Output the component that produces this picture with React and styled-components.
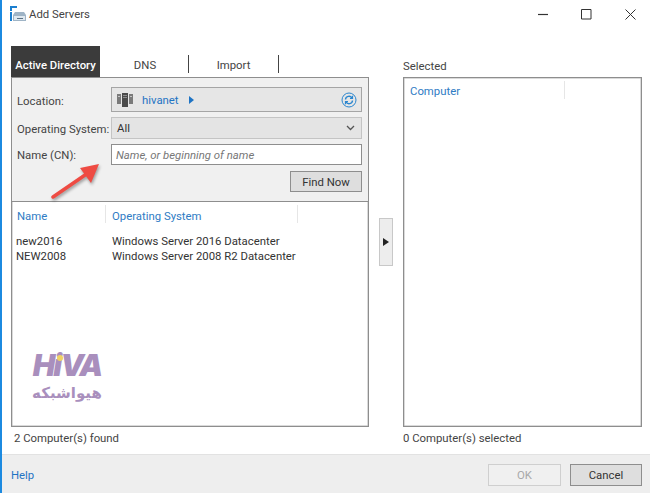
import React from "react"
import styled, { createGlobalStyle } from "styled-components"

const GlobalStyle = createGlobalStyle`
  html, body {
    margin: 0;
    padding: 0;
    background: #fff;
  }
`

const Window = styled.div`
  position: relative;
  box-sizing: border-box;
  width: 650px;
  height: 493px;
  overflow: hidden;
  display: flex;
  flex-direction: column;
  background: #fff;
  border-left: 2px solid #1c8ae0;
  color: #333;
  font-family: Roboto, "Open Sans", sans-serif;
  font-size: 11.35px;
`

const TitleBar = styled.div`
  height: 28px;
  display: flex;
  align-items: center;
  padding-left: 7px;
`

const Title = styled.span`
  margin-left: 2px;
  color: #444;
`

const WindowButtons = styled.div`
  margin-left: auto;
  display: flex;
  gap: 3.5px;
`

const WindowButton = styled.div`
  width: 40px;
  height: 28px;
  display: flex;
  align-items: center;
  justify-content: center;
`

const Body = styled.div`
  flex: 1;
  box-sizing: border-box;
  padding: 18px 0 0 9px;
  display: grid;
  grid-template-columns: 358px 34px 239px;
  grid-template-rows: 31px 350px 27px;
`

const TabBar = styled.div`
  display: flex;
  align-items: stretch;
`

const Tab = styled.div`
  width: ${p => p.$width}px;
  display: flex;
  align-items: center;
  justify-content: center;
  padding-top: 7px;
  padding-left: ${p => p.$nudge || 0}px;
  box-sizing: border-box;
  background: ${p => (p.$active ? "#3b3b3b" : "transparent")};
  color: ${p => (p.$active ? "#fff" : "#444")};
  font-weight: ${p => (p.$active ? 500 : 400)};
  white-space: nowrap;
`

const TabDivider = styled.div`
  width: 1px;
  height: 18px;
  margin-top: 9px;
  background: #444;
`

const SelectedLabel = styled.div`
  display: flex;
  align-items: flex-end;
  padding-bottom: 4px;
  color: #444;
  grid-column: 3;
`

const Panel = styled.div`
  grid-column: ${p => p.$column};
  grid-row: 2;
  display: flex;
  flex-direction: column;
  position: relative;
  border: 1px solid #8e8e8e;
  box-shadow: inset 0 0 0 0.5px #b5b5b5;
`

const SearchArea = styled.div`
  height: 124px;
  box-sizing: border-box;
  background: #f0f0f0;
  border-bottom: 1px solid #8e8e8e;
  padding: 9px 6px 0 5px;
  display: grid;
  grid-template-columns: 94px 1fr;
  grid-template-rows: 25px 22px 22px 21px;
  row-gap: 5px;
  align-items: center;
`

const FieldLabel = styled.label`
  color: #444;
  white-space: nowrap;
  margin-top: ${p => p.$shift || 0}px;
`

const LocationBox = styled.div`
  height: 100%;
  box-sizing: border-box;
  display: flex;
  align-items: center;
  padding: 0 4px 0 5px;
  background: #e6e6e6;
  border: 1px solid #a5a5a5;
  color: #1f74c4;
`

const LocationName = styled.span`
  margin-left: 9px;
`

const LocationArrow = styled.span`
  margin-left: 10px;
  width: 0;
  height: 0;
  border-left: 5px solid #1f74c4;
  border-top: 4px solid transparent;
  border-bottom: 4px solid transparent;
`

const Refresh = styled.span`
  margin-left: auto;
  display: flex;
`

const SelectBox = styled.div`
  height: 100%;
  box-sizing: border-box;
  display: flex;
  align-items: center;
  justify-content: space-between;
  padding: 0 6px 0 5px;
  background: #e4e4e4;
  border: 1px solid #c4c4c4;
  color: #333;
`

const NameInput = styled.input`
  height: 21px;
  align-self: start;
  width: 100%;
  box-sizing: border-box;
  padding: 0 4px;
  background: #fff;
  border: 1px solid #8e8e8e;
  font-family: inherit;
  font-size: 11.35px;
  outline: none;
  &::placeholder {
    color: #777;
    font-style: italic;
    opacity: 1;
  }
`

const SearchActions = styled.div`
  grid-column: 2;
  display: flex;
  justify-content: flex-end;
  height: 100%;
`

const DialogButton = styled.button`
  box-sizing: border-box;
  width: ${p => p.$width}px;
  height: ${p => p.$height}px;
  padding: 0;
  font-family: inherit;
  font-size: 11.35px;
  background: ${p => (p.$disabled ? "#f0f0f0" : "#dedede")};
  border: 1px solid ${p => (p.$disabled ? "#cfcfcf" : "#8e8e8e")};
  color: ${p => (p.$disabled ? "#a8a8a8" : "#333")};
`

const ListHead = styled.div`
  height: ${p => p.$height}px;
  display: grid;
  grid-template-columns: ${p => p.$columns};
  align-items: center;
  color: #2f7cc4;
`

const HeadCell = styled.div`
  position: relative;
  padding-left: ${p => p.$pad}px;
  height: 100%;
  display: flex;
  align-items: center;
  &::after {
    content: "";
    display: ${p => (p.$divider ? "block" : "none")};
    position: absolute;
    right: 0;
    top: 3px;
    height: 18px;
    width: 1px;
    background: #e6e6e6;
  }
`

const Rows = styled.div`
  padding-top: 5px;
`

const Row = styled.div`
  height: 15px;
  line-height: 15px;
  display: grid;
  grid-template-columns: 96px 1fr;
  padding-left: 4px;
  color: #333;
`

const Status = styled.div`
  grid-column: ${p => p.$column};
  grid-row: 3;
  display: flex;
  align-items: flex-start;
  padding-top: 4px;
  padding-left: ${p => p.$pad}px;
  color: #444;
`

const MoveButton = styled.div`
  grid-column: 2;
  grid-row: 2;
  align-self: start;
  justify-self: center;
  margin-top: 141px;
  width: 14px;
  height: 48px;
  box-sizing: border-box;
  background: #ededed;
  border: 1px solid #c8c8c8;
  display: flex;
  align-items: center;
  justify-content: center;
  &::before {
    content: "";
    border-left: 6px solid #222;
    border-top: 4px solid transparent;
    border-bottom: 4px solid transparent;
  }
`

const Footer = styled.div`
  height: 39px;
  box-sizing: border-box;
  background: #eeeeee;
  border-top: 1px solid #e2e2e2;
  padding: 9px 8px 0 9px;
  display: flex;
  align-items: flex-start;
  gap: 9px;
`

const HelpLink = styled.span`
  margin-right: auto;
  color: #1f74c4;
  line-height: 22px;
`

const ArrowMark = styled.svg`
  position: absolute;
  left: 48px;
  top: 160px;
  filter: drop-shadow(1px 2px 1.5px rgba(0, 0, 0, 0.35));
`

const Watermark = styled.div`
  position: absolute;
  left: 30px;
  top: 347px;
  width: 70px;
  display: flex;
  flex-direction: column;
  align-items: center;
  color: #a98fbd;
`

const WatermarkLatin = styled.div`
  position: relative;
  font-family: Inter, "Liberation Sans", sans-serif;
  font-weight: 900;
  font-style: italic;
  font-size: 30px;
  line-height: 37px;
  letter-spacing: -2px;
  &::after {
    content: "";
    position: absolute;
    left: 24px;
    top: 8px;
    width: 6px;
    height: 6px;
    border-radius: 50%;
    background: #f0d264;
  }
`

const WatermarkPersian = styled.div`
  font-family: "DejaVu Sans", sans-serif;
  font-weight: 700;
  font-size: 15px;
  line-height: 18px;
`

const AppIcon = () => (
  <svg width="18" height="18" viewBox="0 0 18 18">
    <path d="M1 1h7v2H3v3H1zM1 7h2v9H1z" fill="#1c7fcf" />
    <path d="M4 10l2-3h9l2 3v6H4z" fill="#9fb4c6" />
    <path d="M5 11h11v4H5z" fill="#dfe8ef" />
    <path d="M8 13h6v1H8z" fill="#5b7184" />
  </svg>
)

const ServerIcon = () => (
  <svg width="16" height="16" viewBox="0 0 16 16">
    <path d="M0 2h4v10H0zM12 2h4v10h-4z" fill="#7a7a7a" />
    <path d="M5 1h6v14H5z" fill="#4a4a4a" />
    <path d="M6 3h4v1H6zM6 5h4v1H6z" fill="#8d8d8d" />
    <path d="M1 4h2v1H1zM13 4h2v1h-2z" fill="#c4c4c4" />
  </svg>
)

const RefreshIcon = () => (
  <svg width="16" height="16" viewBox="0 0 16 16" fill="none" stroke="#2a86cf">
    <circle cx="8" cy="8" r="7" />
    <path d="M4.5 7.5A3.5 3.5 0 0 1 11 6M11.5 8.5A3.5 3.5 0 0 1 5 10" strokeWidth="1.4" />
    <path d="M11.5 3.8V6.4H9M4.5 12.2V9.6H7" strokeWidth="1.2" />
  </svg>
)

const Chevron = () => (
  <svg width="9" height="6" viewBox="0 0 9 6" fill="none" stroke="#555" strokeWidth="1.3">
    <path d="M1 1l3.5 3.5L8 1" />
  </svg>
)

export default function App() {
  return (
    <>
      <GlobalStyle />
      <Window>
        <TitleBar>
          <AppIcon />
          <Title>Add Servers</Title>
          <WindowButtons>
            <WindowButton>
              <svg width="11" height="11" viewBox="0 0 11 11">
                <path d="M0 5.5h10" stroke="#333" strokeWidth="1.2" />
              </svg>
            </WindowButton>
            <WindowButton>
              <svg width="11" height="11" viewBox="0 0 11 11" fill="none">
                <path d="M.5.5h9.5v9.5H.5z" stroke="#333" />
              </svg>
            </WindowButton>
            <WindowButton>
              <svg width="11" height="11" viewBox="0 0 11 11" fill="none">
                <path d="M.5.5l10 10M10.5.5l-10 10" stroke="#333" />
              </svg>
            </WindowButton>
          </WindowButtons>
        </TitleBar>

        <Body>
          <TabBar>
            <Tab $active $width={89}>Active Directory</Tab>
            <Tab $width={88} $nudge={2}>DNS</Tab>
            <TabDivider />
            <Tab $width={89}>Import</Tab>
            <TabDivider />
          </TabBar>
          <SelectedLabel>Selected</SelectedLabel>

          <Panel $column={1}>
            <SearchArea>
              <FieldLabel $shift={2}>Location:</FieldLabel>
              <LocationBox>
                <ServerIcon />
                <LocationName>hivanet</LocationName>
                <LocationArrow />
                <Refresh><RefreshIcon /></Refresh>
              </LocationBox>
              <FieldLabel $shift={2}>Operating System:</FieldLabel>
              <SelectBox>
                All
                <Chevron />
              </SelectBox>
              <FieldLabel $shift={-1}>Name (CN):</FieldLabel>
              <NameInput placeholder="Name, or beginning of name" />
              <SearchActions>
                <DialogButton $width={72} $height={21}>Find Now</DialogButton>
              </SearchActions>
            </SearchArea>
            <ListHead $height={27} $columns="94px 192px 1fr">
              <HeadCell $pad={5} $divider>Name</HeadCell>
              <HeadCell $pad={6} $divider>Operating System</HeadCell>
              <HeadCell />
            </ListHead>
            <Rows>
              <Row>
                <span>new2016</span>
                <span>Windows Server 2016 Datacenter</span>
              </Row>
              <Row>
                <span>NEW2008</span>
                <span>Windows Server 2008 R2 Datacenter</span>
              </Row>
            </Rows>
          </Panel>

          <MoveButton />

          <Panel $column={3}>
            <ListHead $height={25} $columns="161px 1fr">
              <HeadCell $pad={6} $divider>Computer</HeadCell>
              <HeadCell />
            </ListHead>
          </Panel>

          <Status $column={1} $pad={3}>2 Computer(s) found</Status>
          <Status $column={3} $pad={0}>0 Computer(s) selected</Status>
        </Body>

        <Footer>
          <HelpLink>Help</HelpLink>
          <DialogButton $disabled $width={73} $height={22}>OK</DialogButton>
          <DialogButton $width={72} $height={22}>Cancel</DialogButton>
        </Footer>

        <ArrowMark width="54" height="42" viewBox="0 0 54 42">
          <path d="M3 37L38 13" stroke="#ee4b43" strokeWidth="3.5" strokeLinecap="round" />
          <path d="M49 4L30 8L41 23z" fill="#ee4b43" />
        </ArrowMark>

        <Watermark>
          <WatermarkLatin>HiVA</WatermarkLatin>
          <WatermarkPersian>هیواشبکه</WatermarkPersian>
        </Watermark>
      </Window>
    </>
  )
}
